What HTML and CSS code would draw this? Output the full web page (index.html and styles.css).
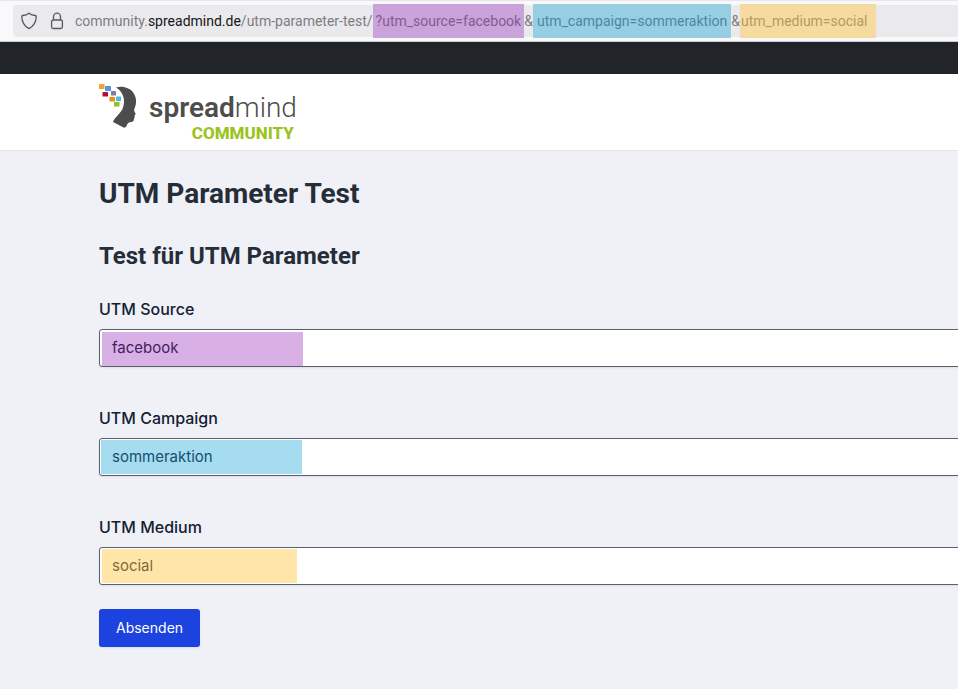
FILE: index.html
```html
<!DOCTYPE html>
<html lang="de">
<head>
<meta charset="utf-8">
<meta name="viewport" content="width=device-width, initial-scale=1">
<title>UTM Parameter Test</title>
<link rel="stylesheet" href="styles.css">
</head>
<body>
<div class="toolbar">
  <div class="address">
    <svg class="address-icon" viewBox="0 0 16 18" aria-hidden="true"><path d="M8 1.200C6.300 2.600 4 3.400 1.600 3.500C1 3.600.8 4 .8 4.600C.9 9.800 3 14.200 8 16.600C13 14.200 15.100 9.800 15.200 4.600C15.200 4 15 3.600 14.400 3.500C12 3.400 9.700 2.600 8 1.200Z"/></svg>
    <svg class="address-icon" viewBox="0 0 16 18" aria-hidden="true"><rect x="2.600" y="8" width="10.800" height="8.500" rx="1.500"/><path d="M4.500 8V4.700a3.500 3.500 0 0 1 7 0V8"/></svg>
    <div class="url">community.<span class="domain">spreadmind.de</span>/utm-parameter-test/<span class="mark mark-source">?utm_source=facebook</span>&amp;<span class="mark mark-campaign">utm_campaign=sommeraktion</span>&amp;<span class="mark mark-medium">utm_medium=social</span></div>
  </div>
</div>
<div class="adminbar"></div>
<header class="header">
  <a class="logo" href="#">
    <svg class="logo-head" viewBox="0 0 40 46" aria-hidden="true">
      <path fill="#4d4e4c" d="M17 3.500C24 1.500 31 4 34.500 9C38 14 37.500 20 35.500 24.500C35 26 35 27 36 28.500L36.800 30.300L35.500 31.300L35.800 33L35 34.500C35 37.500 33.500 38.200 30.500 38.200C28.500 38.700 28 41 27 43L25 43.800L14 38C15 34 21 30 23.500 25C27 17 24.500 7.500 17 3.500Z"/>
      <rect x="0" y="0" width="5.500" height="5" rx=".5" fill="#f3a034"/>
      <rect x="6" y="2" width="6" height="5" rx=".5" fill="#5497d8"/>
      <rect x="3.500" y="8" width="5.500" height="4.500" rx=".5" fill="#b01030"/>
      <rect x="12" y="7" width="5" height="4.500" rx=".5" fill="#807ca6"/>
      <rect x="10.500" y="13" width="5.500" height="4.500" rx=".5" fill="#f58a13"/>
      <rect x="17" y="12.500" width="5" height="4.500" rx=".5" fill="#46bfe2"/>
      <rect x="15" y="18" width="5.500" height="4.500" rx=".5" fill="#94c11f"/>
    </svg>
    <span class="logo-text">
      <span class="logo-name"><b>spread</b>mind</span>
      <span class="logo-sub">COMMUNITY</span>
    </span>
  </a>
</header>
<main class="content">
  <h1>UTM Parameter Test</h1>
  <h2>Test für UTM Parameter</h2>
  <form>
    <div class="field">
      <label for="source">UTM Source</label>
      <input class="source" id="source" type="text" value="facebook">
    </div>
    <div class="field">
      <label for="campaign">UTM Campaign</label>
      <input class="campaign" id="campaign" type="text" value="sommeraktion">
    </div>
    <div class="field">
      <label for="medium">UTM Medium</label>
      <input class="medium" id="medium" type="text" value="social">
    </div>
    <button type="submit">Absenden</button>
  </form>
</main>
</body>
</html>
```
FILE: styles.css
```css
* {
  box-sizing: border-box;
}

body {
  margin: 0;
  min-height: 100vh;
  overflow-x: hidden;
  background: #f0f1f7;
  color: #242d38;
  font-family: Inter, "Liberation Sans", sans-serif;
}

.toolbar {
  padding: 4px 0 4px 13px;
  background: #f9f9fb;
  border-top: 1px solid #e6e6ea;
  border-bottom: 1px solid #cccccf;
}

.address {
  display: flex;
  align-items: center;
  height: 32px;
  padding-left: 8px;
  background: #eaeaec;
  border-radius: 4px 0 0 4px;
}

.address-icon {
  flex: none;
  width: 16px;
  height: 18px;
  margin-right: 12px;
  fill: none;
  stroke: #5a5a5e;
  stroke-width: 1.3;
}

.url {
  margin-left: -2px;
  color: #7d7d82;
  font-family: Roboto, sans-serif;
  font-size: 14px;
  line-height: 34px;
  white-space: nowrap;
}

.domain {
  color: #151519;
}

.mark {
  display: inline-block;
}

.mark-source {
  padding: 0 3px;
  background: #c9a3d9;
  color: #835a94;
}

.mark-campaign {
  padding: 0 4px;
  background: #98cee4;
  color: #478aa3;
}

.mark-medium {
  padding: 0 8px 0 1px;
  background: #f5dba0;
  color: #b39b5e;
}

.adminbar {
  height: 32px;
  background: #212529;
}

.header {
  padding: 10px 0 8px 99px;
  background: #fff;
  border-bottom: 1px solid #e2e5ea;
}

.logo {
  display: flex;
  align-items: flex-start;
  gap: 10px;
  color: #4d4e4c;
  font-family: Roboto, sans-serif;
  text-decoration: none;
}

.logo-head {
  width: 40px;
  height: 46px;
}

.logo-text {
  display: flex;
  flex-direction: column;
  align-items: flex-end;
  padding-top: 8px;
}

.logo-name {
  font-size: 28px;
  font-weight: 300;
  line-height: 32px;
}

.logo-name b {
  font-weight: 600;
}

.logo-sub {
  padding-right: 3px;
  color: #9ac31c;
  font-size: 17px;
  font-weight: 800;
  line-height: 18px;
}

.content {
  padding: 25px 0 40px 99px;
}

h1,
h2 {
  margin: 0;
  font-family: Roboto, sans-serif;
  font-weight: 700;
}

h1 {
  font-size: 28px;
  line-height: 36px;
}

h2 {
  margin: 27px 0 24px;
  font-size: 24px;
  line-height: 34px;
}

.field {
  margin-bottom: 39px;
}

.field:last-of-type {
  margin-bottom: 24px;
}

label {
  display: block;
  margin-bottom: 8px;
  color: #122033;
  font-size: 16px;
  font-weight: 500;
  line-height: 24px;
}

input {
  display: block;
  width: calc(100% + 8px);
  height: 38px;
  padding: 0 12px 2px;
  border: 1px solid #5b616c;
  border-radius: 3px;
  background-color: #fff;
  background-repeat: no-repeat;
  background-position: 2px 2px;
  box-shadow: 0 1px 2px rgba(0, 0, 0, 0.08);
  font: 15px/24px Inter, "Liberation Sans", sans-serif;
}

.source {
  background-image: linear-gradient(#d8b0e5, #d8b0e5);
  background-size: 201px 34px;
  color: #43205f;
}

.campaign {
  background-image: linear-gradient(#a5dcf0, #a5dcf0);
  background-position: 1px 1px;
  background-size: 201px 34px;
  color: #144f70;
}

.medium {
  background-image: linear-gradient(#ffe6a8, #ffe6a8);
  background-position: 2px 1px;
  background-size: 195px 34px;
  color: #7d6a38;
}

button {
  height: 38px;
  padding: 0 17px;
  border: 0;
  border-radius: 3px;
  background: #1c42e0;
  box-shadow: 0 1px 2px rgba(0, 0, 0, 0.08);
  color: #fff;
  font: 14px/24px Inter, "Liberation Sans", sans-serif;
}
```
